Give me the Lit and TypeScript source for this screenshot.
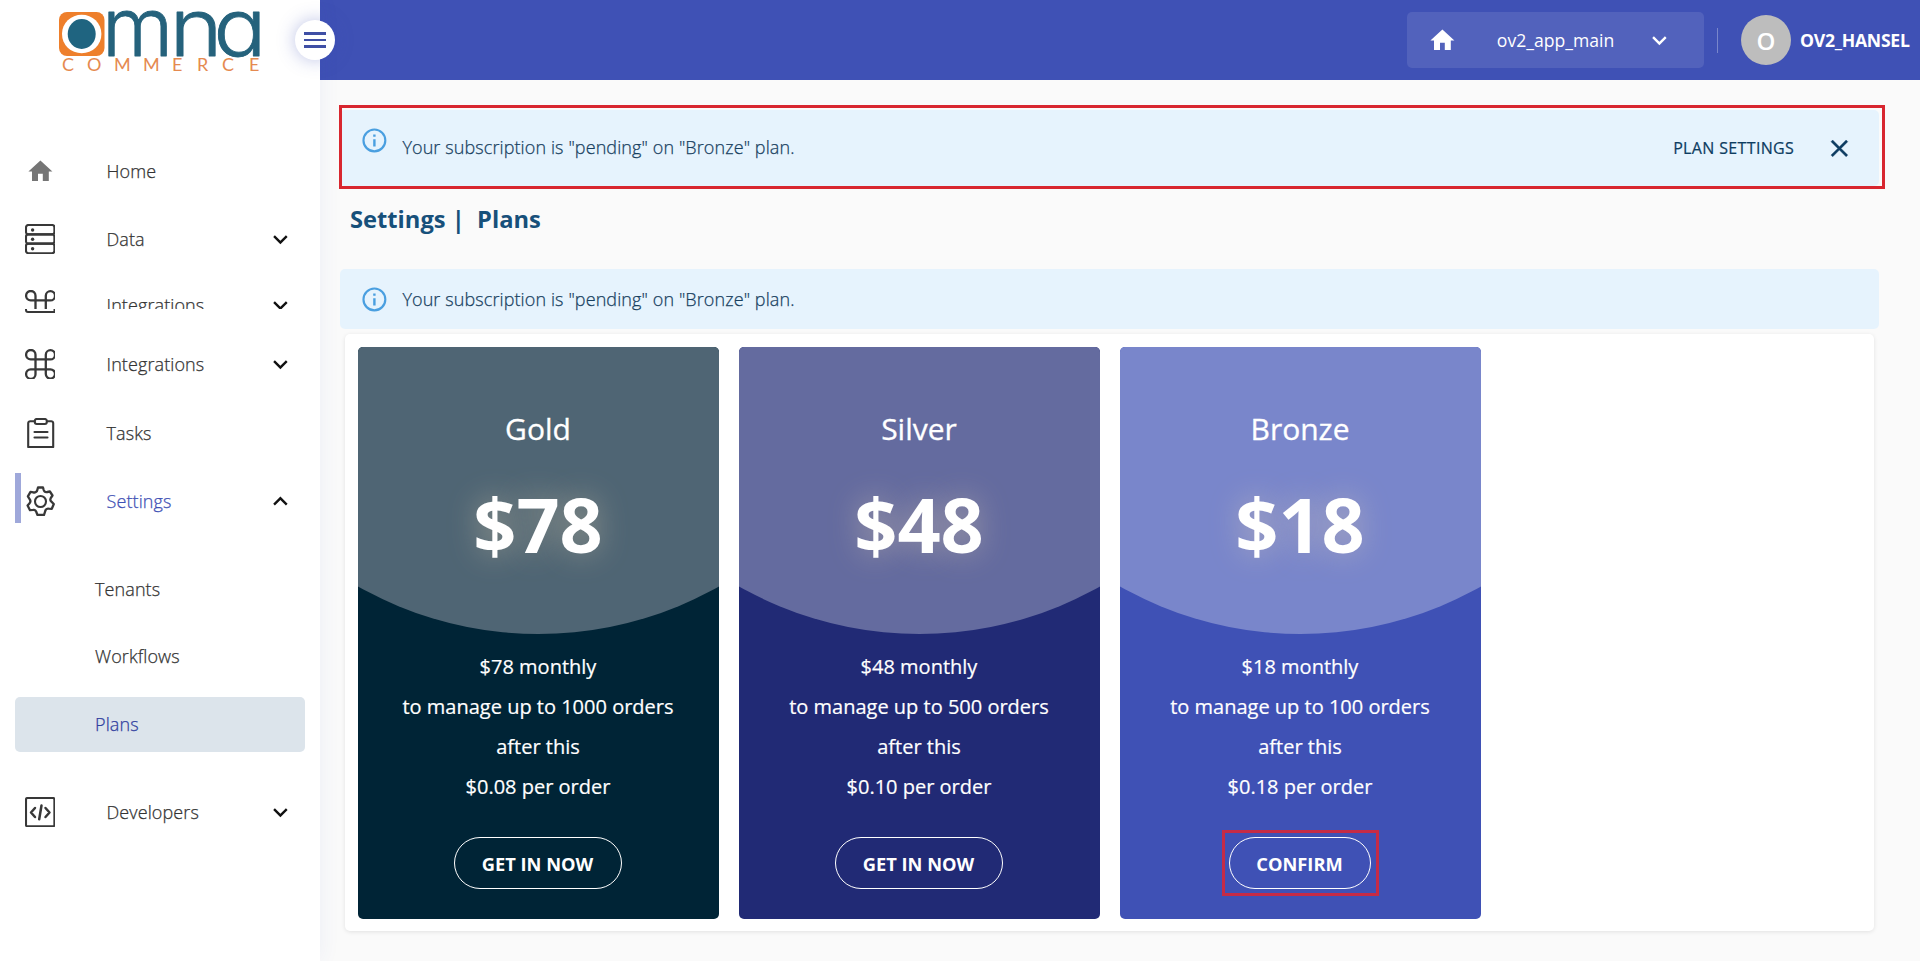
import { LitElement, html, css, svg } from "lit";
import { customElement } from "lit/decorators.js";
import { classMap } from "lit/directives/class-map.js";

const home = svg`<path d="M10 20v-6h4v6h5v-8h3L12 3 2 12h3v8z" fill="currentColor"/>`;
const down = svg`<path d="M7.4 8.6 12 13.2l4.6-4.6L18 10l-6 6-6-6z" fill="currentColor"/>`;
const up = svg`<path d="M7.4 15.4 12 10.8l4.6 4.6L18 14l-6-6-6 6z" fill="currentColor"/>`;
const close = svg`<path d="M19 6.4 17.6 5 12 10.6 6.4 5 5 6.4 10.6 12 5 17.6 6.4 19 12 13.4 17.6 19 19 17.6 13.4 12z" fill="currentColor" stroke="currentColor" stroke-width=".3"/>`;
const info = svg`<path d="M11 7h2v2h-2zm0 4h2v6h-2zM12 2a10 10 0 1 0 0 20 10 10 0 0 0 0-20zm0 18.2a8.2 8.2 0 1 1 0-16.4 8.2 8.2 0 0 1 0 16.4z" fill="currentColor"/>`;
const material = (shape: unknown) => html`<svg class="mat" viewBox="0 0 24 24">${shape}</svg>`;

const line = (shape: unknown) =>
  html`<svg class="line" viewBox="0 0 30 30" fill="none" stroke="#383838" stroke-width="2.1" stroke-linejoin="round" stroke-linecap="round">${shape}</svg>`;
const icons: Record<string, unknown> = {
  home: material(home),
  data: line(svg`<rect x="1" y="1" width="28.4" height="9.4" rx="2.4"/><rect x="1" y="10.4" width="28.4" height="9.2" rx="2.4"/><rect x="1" y="19.6" width="28.4" height="9.6" rx="2.4"/><g fill="#383838" stroke="none"><circle cx="7.6" cy="6" r="1.7"/><circle cx="7.6" cy="15.2" r="1.7"/><circle cx="7.6" cy="24.8" r="1.7"/></g>`),
  command: line(svg`<path d="M10.5 5.7V25a4.7 4.7 0 1 1-4.8-4.6h19.6a4.6 4.6 0 1 1-4.5 4.6V5.7a4.6 4.6 0 1 1 4.5 4.7H5.7a4.7 4.7 0 1 1 4.8-4.7z" stroke-width="2.3"/>`),
  tasks: line(svg`<path d="M9.500 3.200H5.200a2 2 0 0 0-2 2V29h25V5.200a2 2 0 0 0-2-2H22"/><rect x="9.800" y="1" width="12" height="5" rx="2"/><path d="M9.500 14h13M9.500 19.500h13"/>`),
  settings: line(svg`<circle cx="15.500" cy="15.500" r="5.500"/><path d="M12.300 4 13 1.500h5L18.700 4a3 3 0 0 0 3.600 2l2.600-.5 2.600 4-1.700 2.500a3 3 0 0 0 .6 3.700l2.400 2.300-2 4.800-3.200-.2a3 3 0 0 0-3.300 2.300L19 29h-6.500l-1.200-3a3 3 0 0 0-3.300-2.100l-3 .3-2.400-4.700 2-2.300a3 3 0 0 0 .2-3.700L2.900 10.300l2.600-4.500 2.800.5a3 3 0 0 0 4-2.300z" stroke-width="2.300"/>`),
  code: line(svg`<rect x="1" y="1" width="28.400" height="28.400" rx="1.500"/><path d="m10 11-4 4.500 4 4.500M20.500 11l4 4.500-4 4.500M16.500 8.500l-2.300 13.800" stroke-width="2.500"/>`),
};

@customElement("nav-row")
class NavRow extends LitElement {
  static properties = { icon: {}, label: {}, arrow: {}, active: { type: Boolean } };
  declare icon: string;
  declare label: string;
  declare arrow: string;
  declare active: boolean;
  static styles = css`
    :host { display: block; }
    .row { height: 68px; display: flex; align-items: center; padding: 0 25px 0 15px; color: #333; }
    .bar { width: 6px; height: 50px; margin: 0 4px 6px 0; }
    .active .bar { background: #9fa8da; }
    .icon { width: 30px; height: 30px; display: flex; justify-content: center; align-items: center; }
    .line { width: 30px; height: 30px; }
    .mat { width: 28.8px; height: 28.8px; display: block; }
    .icon .mat { color: #757575; }
    .label { margin-left: 51.5px; flex: 1; font-weight: 300; font-size: 18px; letter-spacing: .1px; -webkit-text-stroke: .25px currentColor; }
    .active .label { color: #3f51b5; }
    .arrow { color: #111; }
  `;
  render() {
    return html`<div class=${classMap({ row: true, active: !!this.active })}>
      <span class="bar"></span><span class="icon">${icons[this.icon]}</span>
      <span class="label">${this.label}</span>
      ${this.arrow ? html`<span class="arrow">${material(this.arrow === "up" ? up : down)}</span>` : ""}
    </div>`;
  }
}

const plans = [
  { name: "Gold", tone: "gold", price: "78", orders: "1000", fee: "0.08", action: "GET IN NOW" },
  { name: "Silver", tone: "silver", price: "48", orders: "500", fee: "0.10", action: "GET IN NOW" },
  { name: "Bronze", tone: "bronze", price: "18", orders: "100", fee: "0.18", action: "CONFIRM" },
];

@customElement("app-root")
class AppRoot extends LitElement {
  static styles = css`
    :host { display: block; height: 961px; font-family: "Open Sans", "Noto Sans", sans-serif; background: #fafafa; overflow: hidden; }
    * { box-sizing: border-box; }
    .mat { width: 28.8px; height: 28.8px; display: block; flex: none; }
    .app { display: grid; grid-template-columns: 320px 1fr; height: 961px; }
    aside { background: #fff; box-shadow: 0 0 20px rgba(63, 81, 181, .07); position: relative; z-index: 1; }
    .logo { height: 137px; padding: 8px 0 0 58px; }
    .logo svg { display: block; overflow: visible; }
    .alt { font-feature-settings: "cv11" 1; }
    .toggle { position: absolute; left: 295px; top: 20px; width: 40px; height: 40px; border-radius: 50%; background: #fff; box-shadow: 0 0 18px rgba(63, 81, 181, .35); display: flex; flex-direction: column; align-items: center; justify-content: center; gap: 4px; }
    .toggle i { width: 22px; height: 2.4px; background: #3f4fa5; }
    .cut { height: 38px; margin-top: -2px; overflow: hidden; }
    .tail { height: 21px; padding-left: 25px; }
    .tail svg { display: block; }
    .gap { height: 1px; }
    .sub { padding: 20px 15px; }
    .sub div { height: 55px; margin-bottom: 12.500px; padding: 0 0 2px 80px; display: flex; align-items: center; font-weight: 300; font-size: 18px; letter-spacing: .1px; -webkit-text-stroke: .25px currentColor; color: #333; border-radius: 5px; }
    .sub div:first-child { margin-top: 7px; }
    .sub .on { background: #dce4eb; color: #303f9f; margin-bottom: 6px; }
    header { height: 80px; background: #3f51b5; color: #fff; display: flex; align-items: center; justify-content: flex-end; padding-right: 10px; }
    .tenant { width: 297px; height: 56px; background: #5262bc; border-radius: 5px; display: flex; align-items: center; padding-left: 21px; font-size: 17.600px; }
    .tenant span { width: 117px; margin: 0 31px 0 40px; }
    .rule { width: 1px; height: 25px; background: #7986cb; margin: 0 23px 0 13px; }
    .avatar { width: 50px; height: 50px; border-radius: 50%; background: #bdbdbd; display: grid; place-items: center; font-size: 24px; font-weight: 600; margin-right: 9px; }
    .user { font-weight: 700; font-size: 17.600px; letter-spacing: -.25px; width: 110px; white-space: nowrap; }
    main { padding: 30px 41px 0 20px; }
    .alert { background: #e6f3fd; color: #173f5f; border-radius: 5px; display: flex; padding: 0 25px 0 19.600px; font-weight: 300; font-size: 18px; letter-spacing: .1px; align-items: center; height: 60px; }
    .alert .mat:first-child { color: #4a9fe0; }
    .alert p { margin: 0 0 0 14px; flex: 1; -webkit-text-stroke: .25px currentColor; }
    .alert.top { height: 76px; position: relative; }
    .alert.top p { padding-bottom: 2px; }
    .alert.top > .mat:first-child { margin-bottom: 16px; }
    .alert.top > .mat:last-child { color: #0d3c61; }
    .alert b { font-weight: 400; font-size: 16px; letter-spacing: .35px; margin-right: 31px; color: #0d3c61; -webkit-text-stroke: .2px currentColor; }
    .mark { position: absolute; border: 3px solid #d8262f; }
    .top .mark { inset: -5px -6px -3px -1px; }
    h1 { margin: 15px 0 0 10px; height: 68px; line-height: 36px; font-size: 23.700px; font-weight: 700; color: #17507a; white-space: pre; }
    .panel { margin: 5px 5px 0; height: 597px; background: #fff; border-radius: 5px; box-shadow: 0 1px 4px rgba(0, 0, 0, .1); padding: 13px; display: flex; gap: 20px; }
    .card { width: 361px; height: 572px; border-radius: 5px; overflow: hidden; color: #fff; text-align: center; }
    .gold { background: #002436; } .gold .head { background: #4f6574; }
    .silver { background: #212a75; } .silver .head { background: #646b9f; }
    .bronze { background: #3f51b5; } .bronze .head { background: #7986cb; }
    .head { height: 287px; padding: 59px 1px 0 0; clip-path: circle(366px at 50% -79px); }
    .name { font-size: 30px; line-height: 46px; -webkit-text-stroke: .3px #fff; }
    .price { font-size: 75.500px; line-height: 100px; margin-top: 22px; font-weight: 700; text-shadow: 0 0 30px rgba(245, 222, 179, .4); }
    .lines { margin: 13px 1px 0 0; height: 160px; font-size: 20px; line-height: 40px; -webkit-text-stroke: .2px #fff; }
    .btn { display: inline-flex; align-items: center; justify-content: center; width: 168px; height: 52px; border: 1px solid #fff; border-radius: 26px; margin: 30px 2px 0 0; font-size: 18.300px; font-weight: 700; position: relative; }
    .bronze .btn { width: 142px; }
    .btn .mark { inset: -8px -9px -8px -8px; border-color: #c52b46; }
  `;
  alertText = 'Your subscription is "pending" on "Bronze" plan.';
  render() {
    return html`<div class="app">
      <aside>
        <div class="logo">
          <svg width="204" height="66" viewBox="58 8 204 66">
            <rect x="59" y="12" width="45.500" height="44" rx="8" fill="#ee7f2b"/>
            <ellipse cx="81.700" cy="34" rx="19.700" ry="19.300" fill="#fff"/>
            <ellipse cx="81.700" cy="34" rx="14" ry="15" fill="#1f6480"/>
            <g font-family="Inter" font-size="80" font-weight="350" fill="#25627c" stroke="#25627c" stroke-width=".8" stroke-linejoin="round" class="alt">
              <text transform="translate(102 55.500) scale(1.020 1)">m</text>
              <text transform="translate(169.500 55.500) scale(1.130 1)">n</text>
              <text transform="translate(213.500 55.500) scale(1.100 1)">a</text>
            </g>
            <text x="62 87 114 143 172 197 222 249" y="71" font-family="Lato" font-size="18" font-weight="400" fill="#e58a50">COMMERCE</text>
          </svg>
        </div>
        <div class="toggle"><i></i><i></i><i></i></div>
        <nav-row icon="home" label="Home"></nav-row>
        <nav-row icon="data" label="Data" arrow="down"></nav-row>
        <div class="cut"><nav-row icon="command" label="Integrations" arrow="down"></nav-row></div>
        <div class="tail"><svg width="30" height="4" fill="none" stroke="#383838" stroke-width="2"><path d="M1 0v1q0 2 2 2h26.500V0"/></svg></div>
        <nav-row icon="command" label="Integrations" arrow="down"></nav-row>
        <div class="gap"></div>
        <nav-row icon="tasks" label="Tasks"></nav-row>
        <nav-row icon="settings" label="Settings" arrow="up" active></nav-row>
        <div class="sub"><div>Tenants</div><div>Workflows</div><div class="on">Plans</div></div>
        <nav-row icon="code" label="Developers" arrow="down"></nav-row>
      </aside>
      <section>
        <header>
          <div class="tenant">${material(home)}<span>ov2_app_main</span>${material(down)}</div>
          <div class="rule"></div>
          <div class="avatar">O</div>
          <div class="user">OV2_HANSEL</div>
        </header>
        <main>
          <div class="alert top">${material(info)}<p>${this.alertText}</p><b>PLAN SETTINGS</b><div class="mark"></div>${material(close)}</div>
          <h1>Settings |  Plans</h1>
          <div class="alert">${material(info)}<p>${this.alertText}</p></div>
          <div class="panel">
            ${plans.map((p) => html`<div class="card ${p.tone}">
              <div class="head"><div class="name">${p.name}</div><div class="price">$${p.price}</div></div>
              <div class="lines">$${p.price} monthly<br>to manage up to ${p.orders} orders<br>after this<br>$${p.fee} per order</div>
              <div class="btn">${p.action}${p.action === "CONFIRM" ? html`<div class="mark"></div>` : ""}</div>
            </div>`)}
          </div>
        </main>
      </section>
    </div>`;
  }
}
